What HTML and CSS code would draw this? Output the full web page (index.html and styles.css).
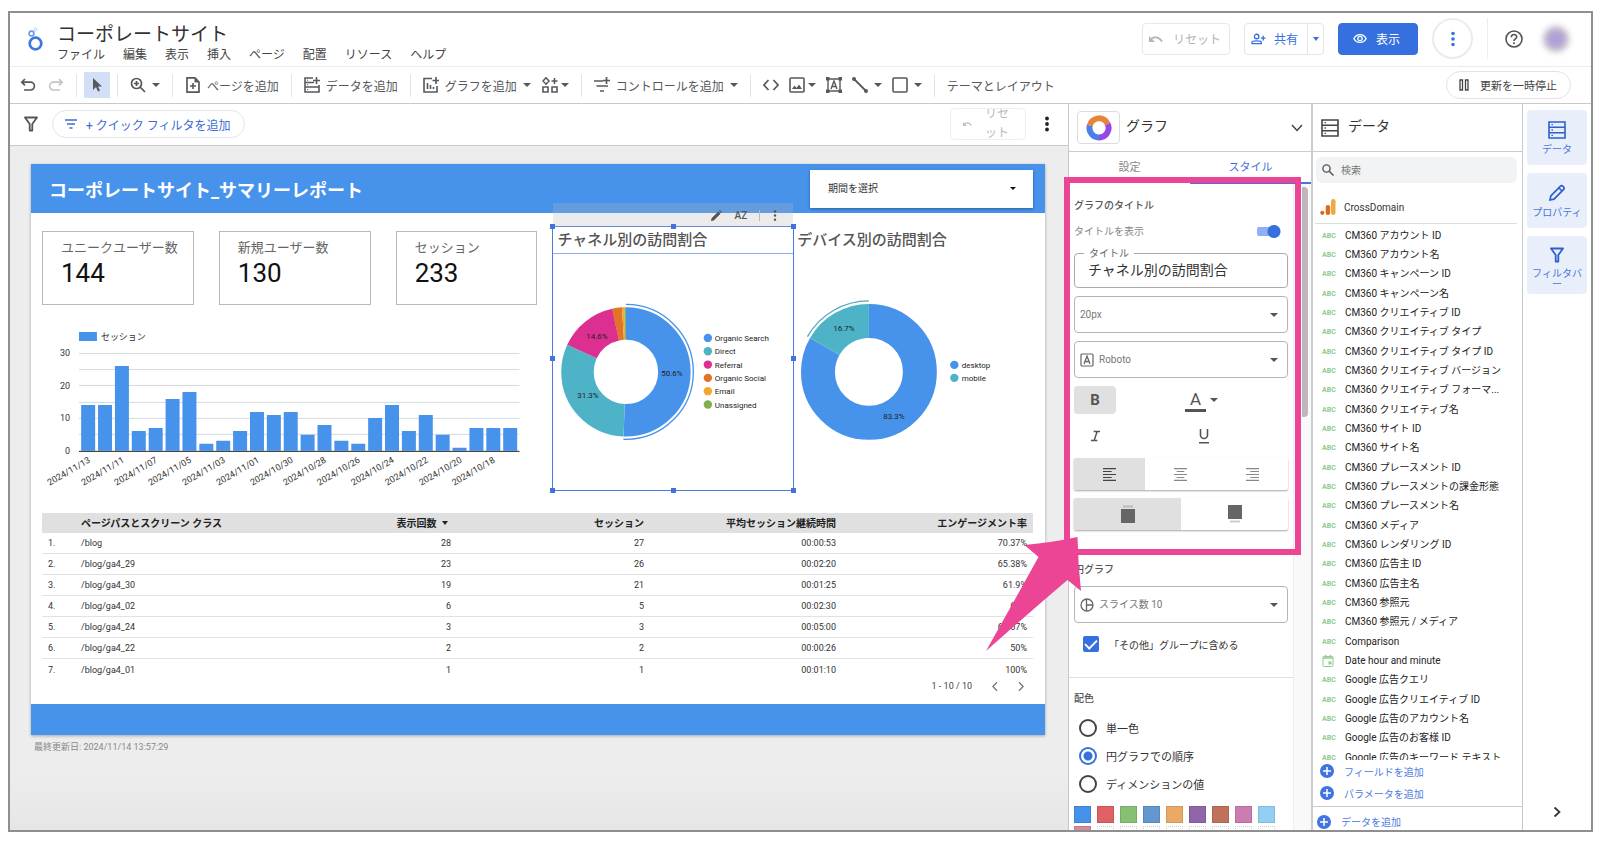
FILE: index.html
```html
<!DOCTYPE html>
<html lang="ja">
<head>
<meta charset="utf-8">
<title>コーポレートサイト</title>
<link rel="stylesheet" href="styles.css">
</head>
<body>
<svg class="defs" aria-hidden="true">
  <symbol id="i-rows" viewBox="0 0 18 18"><path d="M1 1h16v16H1zM1 6.3h16M1 11.7h16" fill="none" stroke="currentColor" stroke-width="1.6"/><path d="M3.5 3.6h1.4M3.5 9h1.4M3.5 14.4h1.4" stroke="currentColor" stroke-width="1.4"/></symbol>
  <symbol id="i-undo" viewBox="0 0 16 16"><path d="M5 2 1.8 5.2 5 8.4M2 5.2h8.5a3.9 3.9 0 0 1 0 7.8H4" fill="none" stroke="currentColor" stroke-width="1.7"/></symbol>
  <symbol id="i-back" viewBox="0 0 14 8"><path d="M1.5 4.5C5 1 10 1.500 13 6.500" fill="none" stroke="currentColor" stroke-width="1.800"/><path d="M0 1v6h6z" fill="currentColor"/></symbol>
  <symbol id="i-funnel" viewBox="0 0 14 16"><path d="M1 1.500h12L8.300 8v6.500H5.700V8z" fill="none" stroke="currentColor" stroke-width="1.800" stroke-linejoin="round"/></symbol>
  <symbol id="i-plus" viewBox="0 0 14 14"><circle cx="7" cy="7" r="7" fill="currentColor"/><path d="M7 3v8M3 7h8" stroke="#fff" stroke-width="1.500"/></symbol>
</svg>
<div class="app">
  <header class="topbar">
    <svg class="logo" viewBox="0 0 18 24"><circle cx="9.500" cy="16.500" r="5.800" fill="none" stroke="#3f76e6" stroke-width="2.700"/><circle cx="5.500" cy="6.500" r="2.400" fill="none" stroke="#6d9bf0" stroke-width="1.700"/><circle cx="9.500" cy="2.500" r="1.500" fill="none" stroke="#b3cbf7" stroke-width="1"/></svg>
    <div class="doc">
      <h1>コーポレートサイト</h1>
      <nav class="menu"><a href="#">ファイル</a><a href="#">編集</a><a href="#">表示</a><a href="#">挿入</a><a href="#">ページ</a><a href="#">配置</a><a href="#">リソース</a><a href="#">ヘルプ</a></nav>
    </div>
    <div class="actions">
      <button class="btn muted"><svg class="back" ><use href="#i-back"/></svg>リセット</button>
      <div class="split"><button class="share"><svg viewBox="0 0 16 12"><circle cx="6" cy="3.300" r="2.400" fill="none" stroke="currentColor" stroke-width="1.400"/><path d="M1 11v-1.200C1 7.500 11 7.500 11 9.800V11zM13 2.500v5M10.500 5h5" fill="none" stroke="currentColor" stroke-width="1.400"/></svg>共有</button><button class="more" aria-label="共有オプション"><i class="caret"></i></button></div>
      <button class="btn primary"><svg viewBox="0 0 16 12"><path d="M1 6c3-6 11-6 14 0-3 6-11 6-14 0z" fill="none" stroke="currentColor" stroke-width="1.500"/><circle cx="8" cy="6" r="2.500" fill="none" stroke="currentColor" stroke-width="1.400"/></svg>表示</button>
      <button class="round" aria-label="その他"><svg viewBox="0 0 4 16"><g fill="currentColor"><circle cx="2" cy="2.500" r="1.800"/><circle cx="2" cy="8" r="1.800"/><circle cx="2" cy="13.500" r="1.800"/></g></svg></button>
      <div class="account">
        <button class="plain" aria-label="ヘルプ"><svg class="help" viewBox="0 0 18 18"><circle cx="9" cy="9" r="8" fill="none" stroke="currentColor" stroke-width="1.600"/><path d="M6.300 7.200c0-3.600 5.400-3.500 5.400-.2C11.700 8.800 9 9 9 11" fill="none" stroke="currentColor" stroke-width="1.600"/><circle cx="9" cy="13.300" r="1" fill="currentColor"/></svg></button>
        <div class="avatar"></div>
      </div>
    </div>
  </header>

  <div class="toolbar">
    <div class="group first"><button aria-label="元に戻す"><svg><use href="#i-undo"/></svg></button><button class="off" aria-label="やり直す"><svg class="flip"><use href="#i-undo"/></svg></button></div>
    <div class="group tile"><button class="on" aria-label="選択"><svg viewBox="0 0 16 16"><path d="M4 1v12l3-3 2 4.500 2-1L9 9.500h4z" fill="currentColor"/></svg></button></div>
    <div class="group"><button><svg viewBox="0 0 16 16"><circle cx="6.500" cy="6.500" r="5" fill="none" stroke="currentColor" stroke-width="1.700"/><path d="m10 10 5 5M6.500 4v5M4 6.500h5" stroke="currentColor" stroke-width="1.700"/></svg><i class="caret"></i></button></div>
    <div class="group"><button><svg viewBox="0 0 16 16"><path d="M2 .8h8L14 5v10.200H2z" fill="none" stroke="currentColor" stroke-width="1.700" stroke-linejoin="round"/><path d="M9.500 1v4.500H14" fill="currentColor"/><path d="M8 6v6M5 9h6" stroke="currentColor" stroke-width="1.600"/></svg>ページを追加</button></div>
    <div class="group"><button><svg viewBox="0 0 16 16"><path d="M9 1H1v14h14v-5H1M1 5.500h9M15 10V8M12.500 0v7M9 3.500h7" fill="none" stroke="currentColor" stroke-width="1.600"/><path d="M3 3.200h1.200M3 7.800h1.200M3 12.600h1.200" stroke="currentColor"/></svg>データを追加</button></div>
    <div class="group wide"><button><svg viewBox="0 0 16 16"><path d="M9 1.500H1V15h13V9" fill="none" stroke="currentColor" stroke-width="1.600"/><path d="M4.500 12V6M7.500 12V8M10.500 12v-2M13 0v7M9.500 3.500h7" stroke="currentColor" stroke-width="1.600"/></svg>グラフを追加<i class="caret"></i></button><button class="tight"><svg viewBox="0 0 16 16"><path d="M4 .8 7 4 4 7.200 1 4zM1 10h5v5H1zM10 10h5v5h-5zM12.500 1v6M9.500 4h6" fill="none" stroke="currentColor" stroke-width="1.600"/></svg><i class="caret"></i></button></div>
    <div class="group"><button><svg viewBox="0 0 16 16"><path d="M0 4h9M12.500 0v7M9 3.500h7M2.500 9H14M6 14h4" stroke="currentColor" stroke-width="1.700"/></svg>コントロールを追加<i class="caret"></i></button></div>
    <div class="group shapes"><button aria-label="埋め込み"><svg viewBox="0 0 16 16"><path d="M5.500 3 1 8l4.500 5M10.500 3 15 8l-4.500 5" fill="none" stroke="currentColor" stroke-width="1.700"/></svg></button><button class="tight" aria-label="画像"><svg viewBox="0 0 16 16"><rect x="1" y="1" width="14" height="14" rx="1" fill="none" stroke="currentColor" stroke-width="1.600"/><path d="m3 12 2.500-3.500L7.500 11 10 7.500l3 4.500z" fill="currentColor"/></svg><i class="caret"></i></button><button aria-label="テキスト"><svg viewBox="0 0 16 16"><path d="M2 2h12v12H2z" fill="none" stroke="currentColor" stroke-width="1.400"/><path d="M0 0h3.500v3.500H0zM12.500 0H16v3.500h-3.500zM0 12.500h3.500V16H0zM12.500 12.500H16V16h-3.500z" fill="currentColor"/><path d="M5 12 8 4l3 8M6 9.500h4" fill="none" stroke="currentColor" stroke-width="1.400"/></svg></button><button aria-label="線"><svg viewBox="0 0 16 16"><path d="m2 2 12 12" stroke="currentColor" stroke-width="1.800"/><circle cx="2" cy="2" r="2" fill="currentColor"/><circle cx="14" cy="14" r="2" fill="currentColor"/></svg><i class="caret"></i></button><button aria-label="図形"><svg viewBox="0 0 16 16"><rect x="1" y="1" width="14" height="14" rx="1" fill="none" stroke="currentColor" stroke-width="1.600"/></svg><i class="caret"></i></button></div>
    <div class="group"><button>テーマとレイアウト</button></div>
    <button class="pause"><svg viewBox="0 0 10 12"><path d="M1 1h2.500v10H1zM6.500 1H9v10H6.500z" fill="none" stroke="currentColor" stroke-width="1.300"/></svg>更新を一時停止</button>
  </div>

  <div class="workspace">
    <main class="stage">
      <div class="filterbar">
        <svg class="funnel"><use href="#i-funnel"/></svg>
        <button class="quick"><svg viewBox="0 0 12 10"><path d="M0 1h12M2 5h8M4.500 9h3" stroke="currentColor" stroke-width="1.500"/></svg>+ クイック フィルタを追加</button>
        <button class="reset"><svg><use href="#i-back"/></svg><span>リセット</span></button>
        <button class="plain" aria-label="フィルタのメニュー"><svg class="dots" viewBox="0 0 4 16"><g fill="#222"><circle cx="2" cy="2.500" r="1.900"/><circle cx="2" cy="8" r="1.900"/><circle cx="2" cy="13.500" r="1.900"/></g></svg></button>
      </div>
      <div class="canvas">
        <article class="report">
          <div class="band"><h2>コーポレートサイト_サマリーレポート</h2>
            <div class="pick period"><select aria-label="期間"><option>期間を選択</option></select><i class="caret"></i></div>
          </div>
          <div class="charts">
            <section class="overview">
              <div class="kpis">
                <div class="kpi"><h3>ユニークユーザー数</h3><p>144</p></div>
                <div class="kpi"><h3>新規ユーザー数</h3><p>130</p></div>
                <div class="kpi"><h3>セッション</h3><p>233</p></div>
              </div>
              <svg class="bars" viewBox="0 0 496 168" role="img" aria-label="セッション">
                <rect x="37" y="12" width="18" height="9" fill="#4793ec"/><text x="59" y="20">セッション</text>
                <path d="M37 33.500h441M37 49.500h441M37 65.500h441M37 82.500h441M37 98.500h441M37 114.500h441" stroke="#d5dae0"/>
                <g text-anchor="end"><text x="28" y="36">30</text><text x="28" y="69">20</text><text x="28" y="101">10</text><text x="28" y="134">0</text></g>
                <path stroke="#4793ec" stroke-width="14" d="M46.200 131v-46M63.100 131v-46M80 131v-85M96.900 131v-20M113.800 131v-23M130.700 131v-52M147.600 131v-59M164.500 131v-7M181.400 131v-10M198.300 131v-20M215.200 131v-39M232.100 131v-36M249 131v-39M265.900 131v-16M282.800 131v-26M299.700 131v-10M316.600 131v-7M333.500 131v-33M350.400 131v-46M367.300 131v-20M384.200 131v-36M401.100 131v-16M418 131v-3M434.900 131v-23M451.800 131v-23M468.700 131v-23"/>
                <path d="M37 131.500h441" stroke="#222"/>
                <g text-anchor="end">
                  <text transform="translate(49 142) rotate(-30)">2024/11/13</text><text transform="translate(83 142) rotate(-30)">2024/11/11</text><text transform="translate(116 142) rotate(-30)">2024/11/07</text><text transform="translate(150 142) rotate(-30)">2024/11/05</text><text transform="translate(184 142) rotate(-30)">2024/11/03</text><text transform="translate(218 142) rotate(-30)">2024/11/01</text><text transform="translate(252 142) rotate(-30)">2024/10/30</text><text transform="translate(285 142) rotate(-30)">2024/10/28</text><text transform="translate(319 142) rotate(-30)">2024/10/26</text><text transform="translate(353 142) rotate(-30)">2024/10/24</text><text transform="translate(387 142) rotate(-30)">2024/10/22</text><text transform="translate(421 142) rotate(-30)">2024/10/20</text><text transform="translate(454 142) rotate(-30)">2024/10/18</text>
                </g>
              </svg>
            </section>
            <section class="pie selected">
              <div class="chartbar"><svg viewBox="0 0 12 12"><path d="m0 12 .6-3L8 1.600 10.400 4 3 11.400zM8.800.8 9.600 0 12 2.400l-.8.8z" fill="currentColor"/></svg><span class="az">AZ</span><svg viewBox="0 0 4 12" class="vd"><g fill="currentColor"><circle cx="2" cy="1.500" r="1.300"/><circle cx="2" cy="6" r="1.300"/><circle cx="2" cy="10.500" r="1.300"/></g></svg></div>
              <h3>チャネル別の訪問割合</h3>
              <svg viewBox="0 0 240 236" role="img" aria-label="チャネル別の訪問割合">
                <g fill="none" stroke-width="32.500" transform="rotate(-90 73 118)">
                  <circle cx="73" cy="118" r="48.500" pathLength="100" stroke="#4793ec" stroke-dasharray="50.600 49.400"/>
                  <circle cx="73" cy="118" r="48.500" pathLength="100" stroke="#4fb3c8" stroke-dasharray="31.300 68.700" stroke-dashoffset="-50.600"/>
                  <circle cx="73" cy="118" r="48.500" pathLength="100" stroke="#dd2f92" stroke-dasharray="14.700 85.300" stroke-dashoffset="-81.900"/>
                  <circle cx="73" cy="118" r="48.500" pathLength="100" stroke="#e2732b" stroke-dasharray="2.500 97.500" stroke-dashoffset="-96.500"/>
                  <circle cx="73" cy="118" r="48.500" pathLength="100" stroke="#f0a82f" stroke-dasharray=".6 99.400" stroke-dashoffset="-99"/>
                  <circle cx="73" cy="118" r="48.500" pathLength="100" stroke="#7fb04b" stroke-dasharray=".4 99.600" stroke-dashoffset="-99.600"/>
                  <circle cx="73" cy="118" r="67.500" pathLength="100" stroke="#4793ec" stroke-width="1.300" stroke-dasharray="50.600 49.400"/>
                </g>
                <g text-anchor="middle"><text x="119" y="122">50.6%</text><text x="35" y="144">31.3%</text><text x="44" y="85">14.6%</text></g>
                <circle cx="155" cy="84" r="4.200" fill="#4793ec"/><circle cx="155" cy="97.300" r="4.200" fill="#4fb3c8"/><circle cx="155" cy="110.700" r="4.200" fill="#dd2f92"/><circle cx="155" cy="124" r="4.200" fill="#e2732b"/><circle cx="155" cy="137.300" r="4.200" fill="#f0a82f"/><circle cx="155" cy="150.700" r="4.200" fill="#7fb04b"/>
                <text x="162" y="87">Organic Search</text><text x="162" y="100">Direct</text><text x="162" y="114">Referral</text><text x="162" y="127">Organic Social</text><text x="162" y="140">Email</text><text x="162" y="154">Unassigned</text>
              </svg>
              <i class="h n w"></i><i class="h n c"></i><i class="h n e"></i><i class="h m w"></i><i class="h m e"></i><i class="h s w"></i><i class="h s c"></i><i class="h s e"></i>
            </section>
            <section class="pie">
              <h3>デバイス別の訪問割合</h3>
              <svg viewBox="0 0 240 236" role="img" aria-label="デバイス別の訪問割合">
                <g fill="none" stroke-width="34" transform="rotate(-90 76 118)">
                  <circle cx="76" cy="118" r="51" pathLength="100" stroke="#4793ec" stroke-dasharray="83.300 16.700"/>
                  <circle cx="76" cy="118" r="51" pathLength="100" stroke="#4fb3c8" stroke-dasharray="16.700 83.300" stroke-dashoffset="-83.300"/>
                  <circle cx="76" cy="118" r="71" pathLength="100" stroke="#4fa9b8" stroke-width="1.300" stroke-dasharray="16.700 83.300" stroke-dashoffset="-83.300"/>
                </g>
                <g text-anchor="middle"><text x="101" y="165">83.3%</text><text x="51" y="77">16.7%</text></g>
                <circle cx="161.500" cy="111" r="4.200" fill="#4793ec"/><circle cx="161.500" cy="124" r="4.200" fill="#4fb3c8"/>
                <text x="169" y="114">desktop</text><text x="169" y="127">mobile</text>
              </svg>
            </section>
          </div>
          <div class="tablewrap">
            <table>
              <colgroup><col class="c1"><col class="c2"><col class="c3"><col class="c4"><col class="c5"><col class="c6"></colgroup>
              <thead><tr><th></th><th>ページパスとスクリーン クラス</th><th>表示回数 <i class="caret"></i></th><th>セッション</th><th>平均セッション継続時間</th><th>エンゲージメント率</th></tr></thead>
              <tbody>
                <tr><td>1.</td><td>/blog</td><td>28</td><td>27</td><td>00:00:53</td><td>70.37%</td></tr>
                <tr><td>2.</td><td>/blog/ga4_29</td><td>23</td><td>26</td><td>00:02:20</td><td>65.38%</td></tr>
                <tr><td>3.</td><td>/blog/ga4_30</td><td>19</td><td>21</td><td>00:01:25</td><td>61.9%</td></tr>
                <tr><td>4.</td><td>/blog/ga4_02</td><td>6</td><td>5</td><td>00:02:30</td><td>60%</td></tr>
                <tr><td>5.</td><td>/blog/ga4_24</td><td>3</td><td>3</td><td>00:05:00</td><td>66.67%</td></tr>
                <tr><td>6.</td><td>/blog/ga4_22</td><td>2</td><td>2</td><td>00:00:26</td><td>50%</td></tr>
                <tr><td>7.</td><td>/blog/ga4_01</td><td>1</td><td>1</td><td>00:01:10</td><td>100%</td></tr>
              </tbody>
            </table>
            <div class="pager">1 - 10 / 10<button class="plain" aria-label="前へ"><svg viewBox="0 0 6 10"><path d="M5 .8.9 5 5 9.200" fill="none" stroke="currentColor" stroke-width="1.300"/></svg></button><button class="plain" aria-label="次へ"><svg viewBox="0 0 6 10"><path d="M1 .8 5.100 5 1 9.200" fill="none" stroke="currentColor" stroke-width="1.300"/></svg></button></div>
          </div>
          <div class="footband"></div>
        </article>
        <p class="updated">最終更新日: 2024/11/14 13:57:29</p>
      </div>
    </main>

    <aside class="style">
      <div class="panelhead"><button class="kind" aria-label="円グラフ"><svg viewBox="0 0 26 26"><g fill="none" stroke-width="6"><path d="M3.800 10.500A9.500 9.500 0 0 1 21.700 9" stroke="#e8833a"/><path d="M21.700 9A9.500 9.500 0 0 1 13 22.500" stroke="#9747e8"/><path d="M13 22.500A9.500 9.500 0 0 1 3.800 10.500" stroke="#4a80ea"/></g></svg></button><h2>グラフ</h2><button class="plain end" aria-label="閉じる"><svg viewBox="0 0 12 8"><path d="m1 1 5 5.500L11 1" fill="none" stroke="#444" stroke-width="1.500"/></svg></button></div>
      <div class="tabs"><button>設定</button><button class="active">スタイル</button></div>
      <div class="scroller">
        <form class="form">
          <section class="block">
            <h3>グラフのタイトル</h3>
            <label class="toggle">タイトルを表示<input type="checkbox" role="switch" checked></label>
            <div class="field"><label for="title">タイトル</label><input id="title" value="チャネル別の訪問割合"></div>
            <div class="pick"><select aria-label="文字サイズ"><option>20px</option></select><i class="caret"></i></div>
            <div class="pick icon"><svg viewBox="0 0 14 14"><rect x="1" y="1" width="12" height="12" rx="1" fill="none" stroke="currentColor" stroke-width="1.200"/><path d="M4 11 7 3l3 8M5 8.500h4" fill="none" stroke="currentColor" stroke-width="1.300"/></svg><select aria-label="フォント"><option>Roboto</option></select><i class="caret"></i></div>
            <div class="marks"><button type="button" class="bold on">B</button><button type="button" class="color"><span>A</span><i class="caret"></i></button><button type="button" class="ital" aria-label="斜体"><svg viewBox="0 0 12 12"><path d="M4 1h7M1 11h7M7.800 1 4.500 11" fill="none" stroke="currentColor" stroke-width="1.600"/></svg></button><button type="button" class="under" aria-label="下線"><svg viewBox="0 0 12 15"><path d="M2.500 0v6a3.500 3.500 0 0 0 7 0V0M1 13.800h10" fill="none" stroke="currentColor" stroke-width="1.600"/></svg></button></div>
            <div class="seg"><button type="button" class="on" aria-label="左揃え"><svg viewBox="0 0 12 12"><path d="M0 .6h12M0 3.300h8M0 6h12M0 8.700h8M0 11.400h12" stroke="currentColor"/></svg></button><button type="button" aria-label="中央揃え"><svg viewBox="0 0 12 12"><path d="M0 .6h12M2.500 3.300h7M0 6h12M2.500 8.700h7M0 11.400h12" stroke="currentColor"/></svg></button><button type="button" aria-label="右揃え"><svg viewBox="0 0 12 12"><path d="M0 .6h12M4 3.300h8M0 6h12M4 8.700h8M0 11.400h12" stroke="currentColor"/></svg></button></div>
            <div class="seg pos"><button type="button" class="on" aria-label="上"><svg viewBox="0 0 14 18"><path d="M0 4h14v14H0z" fill="#666"/><path d="M2 1.500h10" stroke="#bbb" stroke-width="2"/></svg></button><button type="button" aria-label="下"><svg viewBox="0 0 14 18"><path d="M0 0h14v14H0z" fill="#666"/><path d="M2 16.500h10" stroke="#ccc" stroke-width="2"/></svg></button></div>
          </section>
          <section class="block slices">
            <h3>円グラフ</h3>
            <div class="pick icon"><svg viewBox="0 0 14 14"><circle cx="7" cy="7" r="6" fill="none" stroke="currentColor" stroke-width="1.300"/><path d="M6.500 1v12M6.500 7H13" stroke="currentColor" stroke-width="1.300"/></svg><select aria-label="スライス数"><option>スライス数 10</option></select><i class="caret"></i></div>
            <label class="check"><input type="checkbox" checked>「その他」グループに含める</label>
          </section>
          <section class="block colors">
            <h3>配色</h3>
            <div class="radios"><label><input type="radio" name="c">単一色</label><label><input type="radio" name="c" checked>円グラフでの順序</label><label><input type="radio" name="c">ディメンションの値</label></div>
            <div class="swatches"><i class="s1"></i><i class="s2"></i><i class="s3"></i><i class="s4"></i><i class="s5"></i><i class="s6"></i><i class="s7"></i><i class="s8"></i><i class="s9"></i><i class="s10"></i><i></i><i></i><i></i><i></i><i></i><i></i><i></i><i></i></div>
          </section>
        </form>
        <div class="gutter"><i></i></div>
      </div>
      <div class="callout"></div>
      <svg class="pointer" viewBox="0 0 96 114"><path d="M0 114C18 82 36 50 52.500 20L38.500 8Q66 5.500 91.500 0 92 27 95 54L81.500 43Q38 80 0 114z" fill="#ec4595"/></svg>
    </aside>

    <aside class="data">
      <div class="panelhead"><svg class="rows"><use href="#i-rows"/></svg><h2>データ</h2></div>
      <label class="search"><svg viewBox="0 0 12 12"><circle cx="4.500" cy="4.500" r="3.600" fill="none" stroke="currentColor" stroke-width="1.400"/><path d="m7.300 7.300 4.200 4.200" stroke="currentColor" stroke-width="1.500"/></svg><input type="text" placeholder="検索" aria-label="検索"></label>
      <div class="source"><svg viewBox="0 0 16 16"><rect x="11" y="0" width="4.500" height="16" rx="2.200" fill="#f2a93b"/><rect x="5.700" y="6" width="4.500" height="10" rx="2.200" fill="#dc6a1f"/><circle cx="2.300" cy="13.800" r="2.100" fill="#dc6a1f"/></svg>CrossDomain</div>
      <div class="fields">
        <ul>
          <li><b>ABC</b>CM360 アカウント ID</li><li><b>ABC</b>CM360 アカウント名</li><li><b>ABC</b>CM360 キャンペーン ID</li><li><b>ABC</b>CM360 キャンペーン名</li><li><b>ABC</b>CM360 クリエイティブ ID</li><li><b>ABC</b>CM360 クリエイティブ タイプ</li><li><b>ABC</b>CM360 クリエイティブ タイプ ID</li><li><b>ABC</b>CM360 クリエイティブ バージョン</li><li><b>ABC</b>CM360 クリエイティブ フォーマ...</li><li><b>ABC</b>CM360 クリエイティブ名</li><li><b>ABC</b>CM360 サイト ID</li><li><b>ABC</b>CM360 サイト名</li><li><b>ABC</b>CM360 プレースメント ID</li><li><b>ABC</b>CM360 プレースメントの課金形態</li><li><b>ABC</b>CM360 プレースメント名</li><li><b>ABC</b>CM360 メディア</li><li><b>ABC</b>CM360 レンダリング ID</li><li><b>ABC</b>CM360 広告主 ID</li><li><b>ABC</b>CM360 広告主名</li><li><b>ABC</b>CM360 参照元</li><li><b>ABC</b>CM360 参照元 / メディア</li><li><b>ABC</b>Comparison</li><li><svg viewBox="0 0 12 12"><rect x="1" y="1.500" width="10" height="10" rx="1" fill="none" stroke="currentColor"/><path d="M1 3h10M3.500 0v2M8.500 0v2" stroke="currentColor" stroke-width="1.500"/><path d="M6.500 6.500h3v3h-3z" fill="currentColor"/></svg>Date hour and minute</li><li><b>ABC</b>Google 広告クエリ</li><li><b>ABC</b>Google 広告クリエイティブ ID</li><li><b>ABC</b>Google 広告のアカウント名</li><li><b>ABC</b>Google 広告のお客様 ID</li><li><b>ABC</b>Google 広告のキーワード テキスト</li>
        </ul>
        <div class="track"><i></i></div>
      </div>
      <div class="adds"><a href="#"><svg><use href="#i-plus"/></svg>フィールドを追加</a><a href="#"><svg><use href="#i-plus"/></svg>パラメータを追加</a></div>
      <a class="adddata" href="#"><svg><use href="#i-plus"/></svg>データを追加</a>
    </aside>

    <nav class="rail">
      <button><svg class="rows"><use href="#i-rows"/></svg>データ</button>
      <button><svg viewBox="0 0 18 18"><path d="m2 16 .8-4L12.500 2.200a1.500 1.500 0 0 1 2.200 0l1 1a1.500 1.500 0 0 1 0 2.200L6 15.200zM11 4l3 3" fill="none" stroke="currentColor" stroke-width="1.700"/></svg>プロパティ</button>
      <button><svg class="fun"><use href="#i-funnel"/></svg>フィルタバー</button>
      <button class="plain collapse" aria-label="折りたたむ"><svg viewBox="0 0 8 12"><path d="m1.500 1.500 5 4.500-5 4.500" fill="none" stroke="#333" stroke-width="1.700"/></svg></button>
    </nav>
  </div>
</div>
</body>
</html>
```

FILE: styles.css
```css
* { box-sizing: border-box; margin: 0; padding: 0; }
body { height: 100vh; padding: 11px 7px 10px 8px; background: #fff; font-family: Roboto, "Noto Sans CJK JP", sans-serif; font-size: 12px; color: #333; overflow: hidden; }
button, input, select { font: inherit; color: inherit; background: none; border: 0; outline: 0; }
button { cursor: pointer; }
a { color: inherit; text-decoration: none; }
svg { display: block; flex: none; }
.defs { position: absolute; width: 0; height: 0; }
.caret { flex: none; display: inline-block; width: 8px; border: 4px solid transparent; border-top-color: currentColor; border-bottom: 0; }
.plain { display: flex; align-items: center; }

.app { height: 100%; display: flex; flex-direction: column; border: 2px solid #8f8f8f; background: #fff; }

/* top bar */
.topbar { flex: none; height: 54px; display: flex; padding-left: 16px; border-bottom: 1px solid #ececec; }
.logo { width: 18px; height: 24px; margin-top: 14px; }
.doc { flex: 1; padding: 9px 0 0 13px; }
.doc h1 { font-size: 19px; line-height: 25px; font-weight: 400; color: #333; }
.menu { display: flex; gap: 18px; line-height: 16px; color: #444; }
.actions { display: flex; align-items: center; gap: 14px; padding-bottom: 2px; }
.btn { height: 32px; display: flex; align-items: center; gap: 10px; padding: 0 12px; border: 1px solid #e8e8e8; border-radius: 4px; }
.muted { width: 88px; padding: 0 6px; color: #b5b5b5; }
.back { width: 14px; height: 8px; }
.split { height: 32px; display: flex; border: 1px solid #e3e5e9; border-radius: 4px; color: #3470de; }
.split svg { width: 15px; height: 12px; }
.share { width: 62px; display: flex; align-items: center; gap: 8px; padding-left: 6px; }
.more { width: 16px; border-left: 1px solid #e3e5e9; display: grid; place-items: center; }
.more .caret { width: 6px; border-width: 4px 3px 0; }
.primary { width: 80px; gap: 9px; padding: 0 14px; background: #3670df; border-color: #3670df; color: #fff; }
.primary svg { width: 14px; height: 11px; }
.round { width: 41px; height: 41px; border: 2px solid #ebebeb; border-radius: 50%; display: grid; place-items: center; color: #3470de; }
.round svg { width: 4px; height: 16px; }
.account { height: 41px; display: flex; align-items: center; gap: 20px; padding: 0 22px 0 17px; border-left: 1px solid #eee; }
.help { width: 18px; height: 18px; color: #555; }
.avatar { width: 26px; height: 26px; border-radius: 50%; background: radial-gradient(circle, #a99be0 15%, #b9adc9 50%, #cfc9cc 75%); filter: blur(3px); }

/* toolbar */
.toolbar { flex: none; height: 37px; display: flex; align-items: center; border-bottom: 1px solid #c9c9c9; color: #55585c; }
.group { height: 23px; display: flex; align-items: center; gap: 9px; padding: 0 12px; border-left: 1px solid #e4e4e4; }
.group button { display: flex; align-items: center; gap: 6px; white-space: nowrap; }
.group .tight { gap: 3px; }
.group svg { width: 16px; height: 16px; }
.wide { gap: 11px; }
.first { border: 0; gap: 12px; padding-left: 10px; }
.first .off { color: #c4c4c4; }
.flip { transform: scaleX(-1); }
.tile { padding: 0 7px; }
.tile .on { width: 26px; height: 26px; justify-content: center; background: #d3dff7; }
.shapes { gap: 10px; }
.pause { height: 28px; margin: 0 20px 0 auto; display: flex; align-items: center; gap: 11px; padding: 0 13px 0 12px; border: 1px solid #e3e3e3; border-radius: 14px; font-size: 11px; color: #444; }
.pause svg { width: 10px; height: 12px; }

.workspace { flex: 1; min-height: 0; display: grid; grid-template-columns: minmax(0, 1fr) 243px 211px 69px; grid-template-rows: minmax(0, 1fr); }

/* stage */
.stage { display: flex; flex-direction: column; min-width: 0; overflow: hidden; }
.filterbar { flex: none; height: 42px; display: flex; align-items: center; padding: 0 19px 1px 14px; border-bottom: 1px solid #c9c9c9; }
.funnel { width: 14px; height: 16px; color: #555; }
.quick { height: 28px; margin: 0 auto 0 14px; display: flex; align-items: center; gap: 9px; padding: 0 13px 0 12px; border: 1px solid #e3e5ea; border-radius: 14px; color: #3d6bd3; }
.quick svg { width: 12px; height: 10px; }
.reset { width: 76px; height: 32px; display: flex; align-items: center; gap: 13px; padding: 0 16px 0 12px; border: 1px solid #eee; border-radius: 4px; color: #bbb; line-height: 19px; overflow: hidden; }
.reset svg { width: 9px; height: 6px; }
.reset span { width: 24px; }
.filterbar .plain { margin-left: 19px; }
.dots { width: 4px; height: 16px; }
.canvas { flex: 1; padding: 18px 23px 0 21px; background: linear-gradient(#ededed calc(100% - 60px), #e6e6e6); }
.report { background: #fff; box-shadow: 0 1px 3px rgba(0, 0, 0, .3); }
.band { height: 49px; display: flex; align-items: center; justify-content: space-between; padding: 0 12px 0 18px; background: #4793ec; color: #fff; }
.band h2 { font-size: 18px; font-weight: 700; }
.charts { display: grid; grid-template-columns: minmax(0, 512fr) minmax(0, 240fr) minmax(0, 240fr); padding: 14px 12px 23px 11px; }
.overview { padding: 4px 16px 0 0; }
.kpis { display: grid; grid-template-columns: 152fr 152fr 142fr; gap: 25px; margin-bottom: 15px; }
.kpi { height: 74px; padding: 7px 0 0 18px; border: 1px solid #b9b9b9; white-space: nowrap; }
.kpi h3 { font-size: 13px; line-height: 18px; font-weight: 400; color: #666; }
.kpi p { font-size: 26px; line-height: 32px; color: #111; }
.bars { width: 100%; font-size: 9px; fill: #333; overflow: visible; }
.pie { position: relative; }
.pie h3 { height: 27px; padding-left: 4px; font-size: 15px; line-height: 26px; font-weight: 500; color: #555; white-space: nowrap; }
.pie > svg { width: 100%; font-size: 8px; fill: #222; }
.selected { outline: 1px solid #4a7de0; }
.selected h3 { border-bottom: 1px solid #8fb0ec; }
.chartbar { position: absolute; left: 0; right: 0; bottom: 100%; height: 24px; display: flex; align-items: center; justify-content: flex-end; gap: 13px; padding-right: 16px; background: rgba(180, 180, 180, .27); color: #555; }
.chartbar svg { width: 11px; height: 11px; }
.chartbar .vd { width: 4px; }
.az { padding-right: 12px; border-right: 1px solid #bbb; font-size: 10px; font-weight: 500; }
.h { position: absolute; width: 5px; height: 5px; background: #4272dc; }
.n { top: -3px; } .m { top: calc(50% - 2px); } .s { bottom: -3px; }
.w { left: -3px; } .c { left: calc(50% - 2px); } .e { right: -3px; }
.tablewrap { padding: 0 12px 0 11px; }
table { width: 100%; table-layout: fixed; border-collapse: collapse; font-size: 9px; color: #333; }
.c1 { width: 33px; } .c3 { width: 20%; } .c4 { width: 193px; } .c5 { width: 192px; } .c6 { width: 197px; }
th { height: 20px; background: #e0e0e0; font-size: 10px; font-weight: 700; text-align: right; white-space: nowrap; color: #222; }
th .caret { width: 6px; border-width: 4px 3px 0; margin: 0 3px 2px; }
td { height: 21px; text-align: right; border-bottom: 1px solid #e2e2e2; }
tbody tr:last-child td { border: 0; }
td:nth-child(1), th:nth-child(1) { text-align: left; padding-left: 6px; }
td:nth-child(2), th:nth-child(2) { text-align: left; padding-left: 6px; }
td:last-child, th:last-child { padding-right: 6px; }
.pager { height: 24px; display: flex; justify-content: flex-end; align-items: flex-start; gap: 20px; padding-right: 9px; font-size: 9px; line-height: 13px; color: #444; }
.pager svg { width: 6px; height: 13px; color: #777; }
.footband { height: 31px; background: #4793ec; }
.updated { padding: 6px 3px; font-size: 9px; line-height: 13px; color: #888; }

/* style panel */
.style { position: relative; display: flex; flex-direction: column; min-height: 0; border-left: 1px solid #c9c9c9; }
.panelhead { flex: none; height: 48px; display: flex; align-items: center; padding: 0 8px; border-bottom: 1px solid #ccc; }
.panelhead h2 { font-size: 14px; line-height: 20px; font-weight: 400; color: #333; padding-bottom: 3px; }
.kind { width: 43px; height: 33px; display: grid; place-items: center; margin-right: 6px; border: 1px solid #dcdcdc; border-radius: 4px; }
.kind svg { width: 26px; height: 26px; }
.end { margin-left: auto; }
.end svg { width: 12px; height: 8px; }
.tabs { flex: none; height: 32px; display: grid; grid-template-columns: 1fr 1fr; font-size: 11px; color: #888; }
.tabs button { padding-bottom: 3px; border-bottom: 2px solid transparent; }
.tabs .active { color: #3f6fd6; border-color: #4a72d8; }
.scroller { flex: 1; min-height: 0; display: flex; overflow: hidden; }
.form { flex: 1; }
.block { padding: 14px 5px 0; display: flex; flex-direction: column; gap: 8px; }
.block h3 { font-size: 10px; line-height: 16px; font-weight: 500; color: #555; }
.toggle { height: 21px; padding-bottom: 2px; display: flex; justify-content: space-between; align-items: center; padding-right: 7px; font-size: 10px; line-height: 16px; color: #888; }
.toggle input { appearance: none; width: 24px; height: 13px; background: radial-gradient(circle at 17px 50%, #3670df 6px, transparent 7px), linear-gradient(#8fb0f2, #8fb0f2) 0 50% / 18px 9px no-repeat; border-radius: 5px; }
.field { position: relative; height: 37px; padding-top: 2px; }
.field input { width: 100%; height: 35px; padding: 0 13px 3px; border: 1px solid #aaa; border-radius: 4px; font-size: 14px; color: #333; }
.field label { position: absolute; left: 10px; top: -4px; padding: 0 5px; background: #fff; font-size: 10px; line-height: 14px; color: #666; }
.pick { position: relative; height: 37px; display: flex; align-items: center; border: 1px solid #b5b5b5; border-radius: 4px; font-size: 10px; color: #777; }
.pick select { flex: 1; height: 100%; appearance: none; padding-left: 5px; }
.pick .caret { position: absolute; right: 9px; color: #555; pointer-events: none; }
.pick svg { width: 14px; height: 14px; margin-left: 5px; color: #666; }
.period { width: 223px; height: 38px; border: 0; border-radius: 0; background: #fff; color: #333; box-shadow: 0 1px 3px rgba(0, 0, 0, .35); }
.period select { padding-left: 18px; }
.period .caret { width: 6px; border-width: 3px 3px 0; right: 17px; color: #111; }
.marks { display: grid; grid-template-columns: 42px 1fr; gap: 8px 44px; color: #555; }
.marks button { height: 28px; display: flex; align-items: center; justify-content: center; }
.bold { font-size: 15px; font-weight: 700; border-radius: 4px; }
.on { background: #e0e0e0; }
.marks .color { justify-content: flex-start; gap: 4px; padding-left: 25px; }
.color span { width: 21px; height: 24px; border-bottom: 3px solid #555; font-size: 17px; line-height: 22px; }
.ital svg { width: 11px; height: 12px; }
.marks .under { justify-content: flex-start; padding-left: 38px; }
.under svg { width: 12px; height: 15px; }
.seg { height: 32px; display: grid; grid-auto-flow: column; grid-auto-columns: 1fr; border-radius: 2px; overflow: hidden; box-shadow: 0 1px 2px rgba(0, 0, 0, .35); color: #888; }
.seg button { display: grid; place-items: center; }
.seg svg { width: 13px; height: 13px; }
.seg .on { color: #444; }
.pos svg { width: 14px; height: 18px; }
.slices { padding-top: 32px; padding-bottom: 25px; border-bottom: 1px solid #e0e0e0; }
.check { margin-top: 5px; height: 16px; display: flex; align-items: center; gap: 10px; padding-left: 9px; font-size: 10px; color: #333; }
.check input { appearance: none; width: 16px; height: 16px; border-radius: 2px; background: #3670df; display: grid; place-items: center; }
.check input::before { content: ""; width: 10px; height: 5px; border: solid #fff; border-width: 0 0 2px 2px; transform: rotate(-45deg) translate(1px, -1px); }
.colors { padding-top: 13px; }
.colors h3 { margin-bottom: -1px; }
.radios label { height: 28px; display: flex; align-items: center; gap: 9px; padding-left: 5px; font-size: 11px; }
.radios input { appearance: none; width: 18px; height: 18px; border: 2px solid #444; border-radius: 50%; }
.radios input:checked { border-color: #3670df; background: radial-gradient(circle, #3670df 4px, transparent 5px); }
.swatches { display: grid; grid-template-columns: repeat(9, 17px); gap: 3px 6px; }
.swatches i { height: 17px; border: 1px dotted #ccc; }
.swatches i[class] { border: 1px solid rgba(0, 0, 0, .1); }
.swatches .s1 { background: #4691eb; } .swatches .s2 { background: #df6065; } .swatches .s3 { background: #86c171; }
.swatches .s4 { background: #6497cf; } .swatches .s5 { background: #eaa965; } .swatches .s6 { background: #9166a8; }
.swatches .s7 { background: #be725a; } .swatches .s8 { background: #cb7db2; } .swatches .s9 { background: #92d0f3; } .swatches .s10 { background: #d68aa0; }
.gutter { width: 18px; padding: 3px 0 0 8px; background: #f9f9f9; border-left: 1px solid #eee; }
.gutter i { display: block; width: 6px; height: 230px; border-radius: 0 4px 4px 0; background: #bdb7ba; }
.callout { position: absolute; left: -5px; right: 10px; top: 73px; height: 378px; border: 6px solid #ec4595; pointer-events: none; }
.pointer { position: absolute; z-index: 2; left: -83px; top: 433px; width: 96px; height: 114px; pointer-events: none; }

/* data panel */
.data { display: flex; flex-direction: column; min-height: 0; border-left: 2px solid #ccc; }
.rows { width: 18px; height: 18px; color: #444; }
.data h2 { padding-left: 9px; }
.search { flex: none; height: 26px; margin: 5px 5px 0 3px; display: flex; align-items: center; gap: 7px; padding: 0 6px; border-radius: 6px; background: #f1f3f4; font-size: 10px; color: #555; }
.search svg { width: 12px; height: 12px; }
.search input { width: 100%; }
.search input::placeholder { color: #777; }
.source { flex: none; height: 41px; margin: 0 5px 0 2px; padding: 8px 0 0 5px; display: flex; align-items: center; gap: 8px; border-bottom: 1px solid #ddd; font-size: 10px; }
.source svg { width: 16px; height: 16px; }
.fields { flex: 1; min-height: 0; display: flex; margin-right: 5px; overflow: hidden; }
.fields ul { width: 185px; flex: none; display: flex; flex-direction: column; list-style: none; padding-top: 2px; margin-bottom: -7px; }
.fields li { flex: 1; min-height: 0; display: flex; align-items: center; padding-left: 9px; font-size: 10px; line-height: 16px; white-space: nowrap; color: #222; }
.fields b { flex: none; width: 23px; font-size: 7px; font-weight: 700; color: #8fca8f; }
.fields svg { width: 12px; height: 12px; margin-right: 11px; color: #8fca8f; }
.track { flex: 1; padding: 5px 4px; border-left: 1px solid #eee; background: #f8f8f8; z-index: -1; }
.track i { display: block; height: 25px; border-radius: 5px; background: #bebebe; }
.adds { flex: none; padding-bottom: 2px; border-bottom: 1px solid #ccc; }
.adds a, .adddata { height: 22px; display: flex; align-items: center; gap: 10px; padding-left: 7px; font-size: 10px; color: #4d7be0; }
.adds svg, .adddata svg { width: 14px; height: 14px; color: #3f74e2; }
.adddata { flex: none; height: 23px; padding: 6px 0 0 4px; }

/* rail */
.rail { display: flex; flex-direction: column; align-items: center; gap: 8px; padding: 6px 4px 12px; border-left: 1px solid #c9c9c9; }
.rail button { width: 100%; min-height: 55px; padding: 11px 4px 4px; display: flex; flex-direction: column; align-items: center; gap: 5px; border-radius: 4px; background: #e8effb; font-size: 10px; line-height: 11px; color: #4a76d6; }
.rail svg, .rail .rows { width: 18px; height: 18px; color: #2c60cc; }
.rail .fun { width: 14px; height: 16px; }
.rail .collapse { min-height: 0; margin-top: auto; padding: 0; background: none; }
.rail .collapse svg { width: 8px; height: 12px; }
```
